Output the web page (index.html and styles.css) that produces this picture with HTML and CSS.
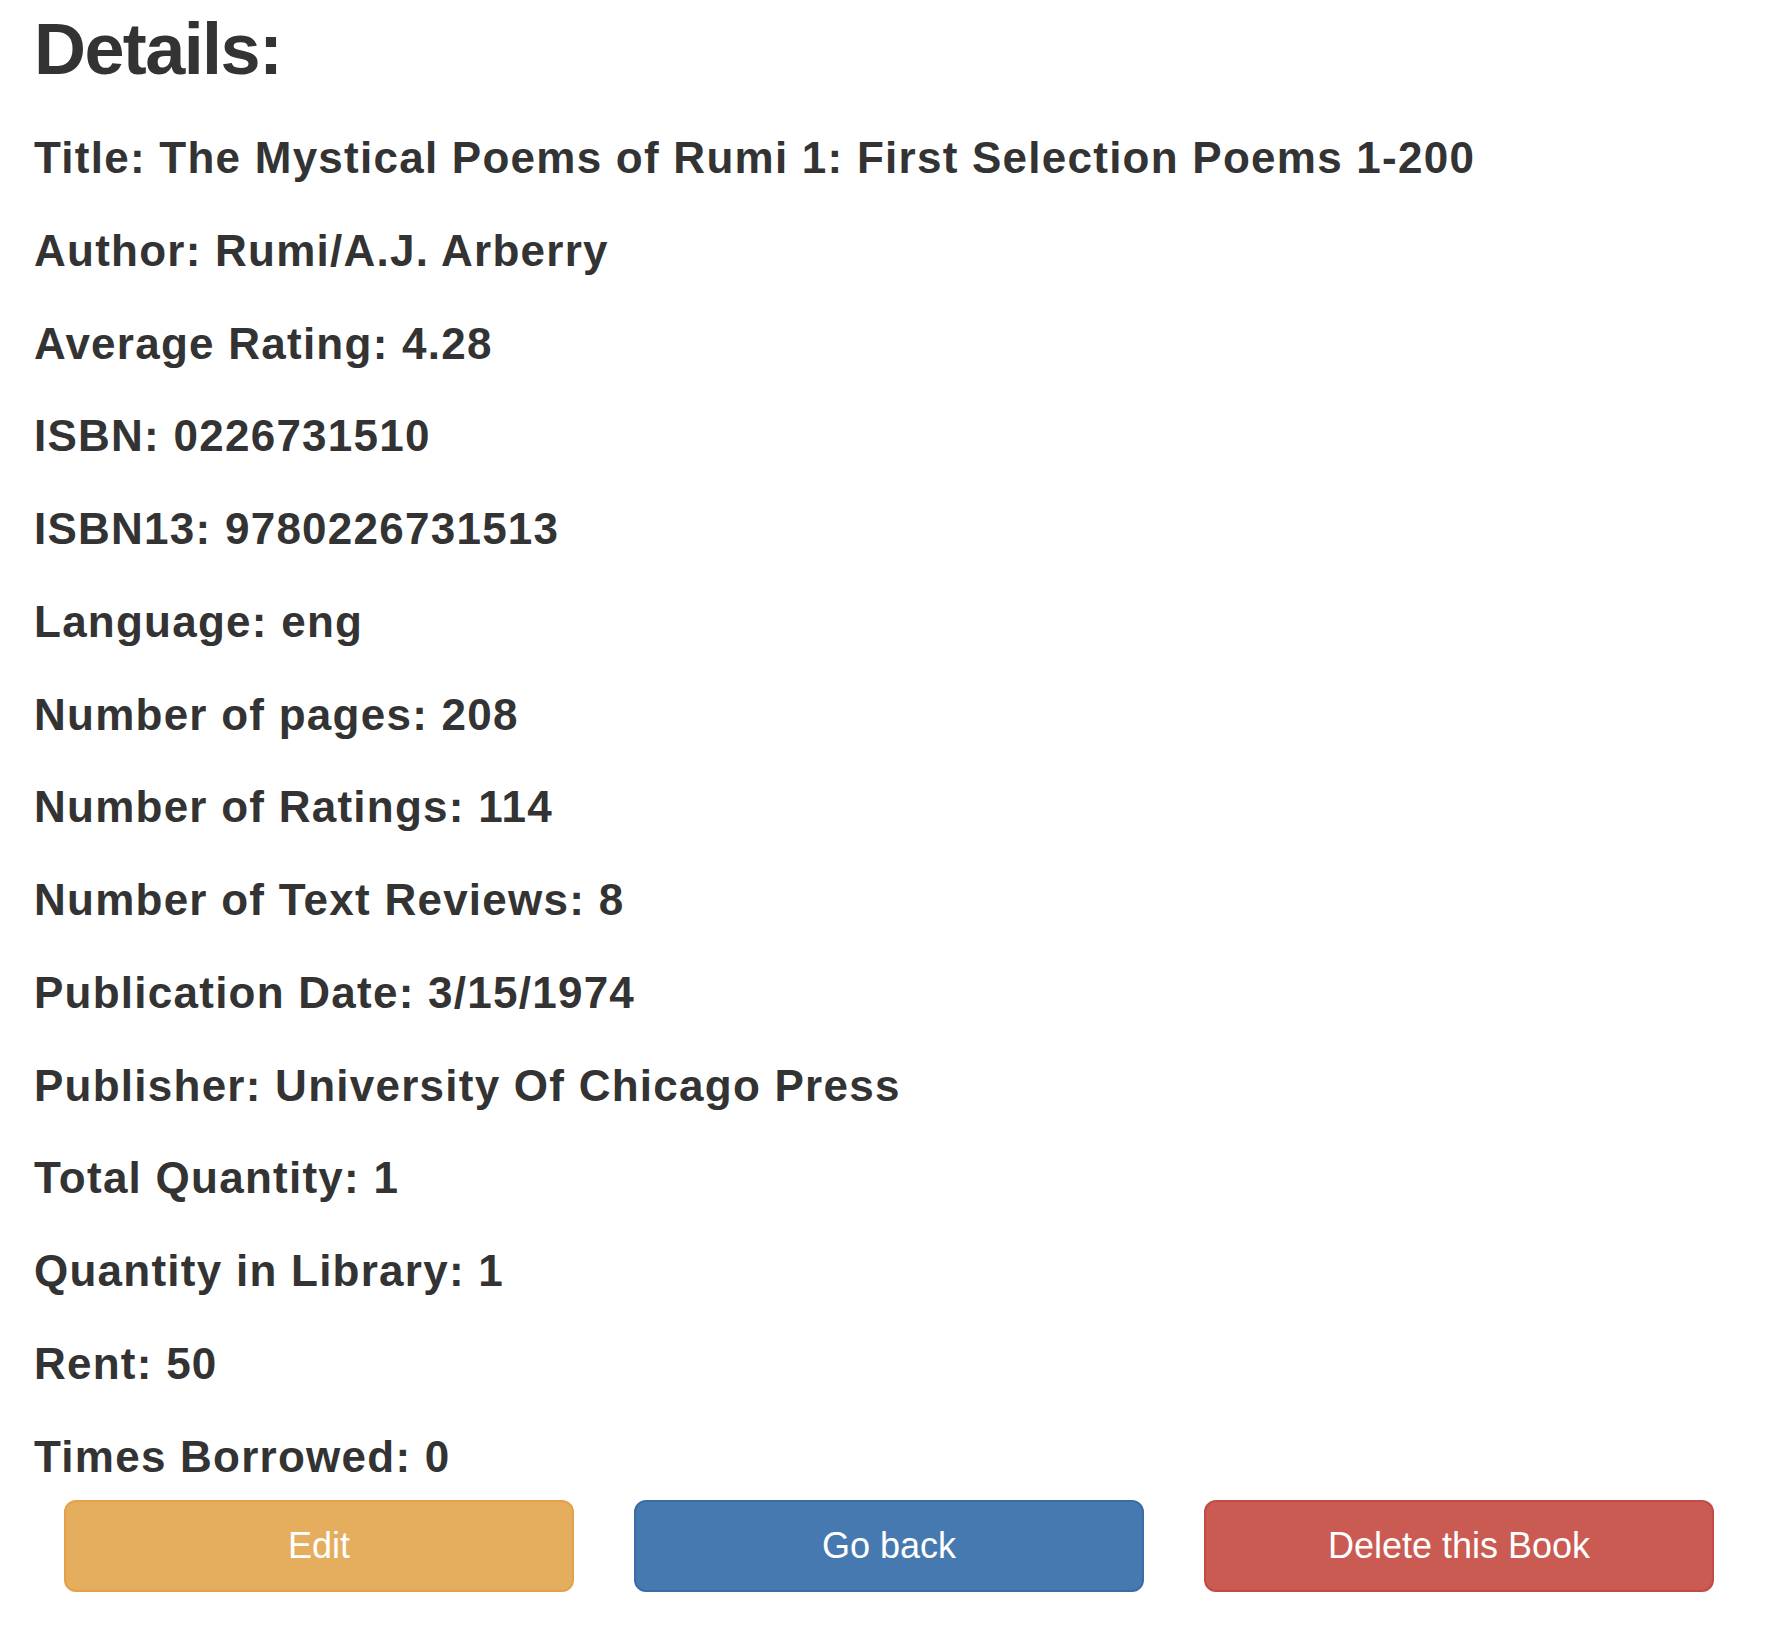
FILE: index.html
```html
<!DOCTYPE html>
<html lang="en">
<head>
<meta charset="utf-8">
<title>Book Details</title>
<link rel="stylesheet" href="styles.css">
</head>
<body>
<main class="page">
  <h1 class="title">Details:</h1>
  <section class="details">
    <p class="item">Title: The Mystical Poems of Rumi 1: First Selection Poems 1-200</p>
    <p class="item">Author: Rumi/A.J. Arberry</p>
    <p class="item">Average Rating: 4.28</p>
    <p class="item">ISBN: 0226731510</p>
    <p class="item">ISBN13: 9780226731513</p>
    <p class="item">Language: eng</p>
    <p class="item">Number of pages: 208</p>
    <p class="item">Number of Ratings: 114</p>
    <p class="item">Number of Text Reviews: 8</p>
    <p class="item">Publication Date: 3/15/1974</p>
    <p class="item">Publisher: University Of Chicago Press</p>
    <p class="item">Total Quantity: 1</p>
    <p class="item">Quantity in Library: 1</p>
    <p class="item">Rent: 50</p>
    <p class="item">Times Borrowed: 0</p>
  </section>
  <div class="actions">
    <div class="col"><button class="btn btn-warning">Edit</button></div>
    <div class="col"><button class="btn btn-primary">Go back</button></div>
    <div class="col"><button class="btn btn-danger">Delete this Book</button></div>
  </div>
</main>
</body>
</html>
```
FILE: styles.css
```css
html, body {
  margin: 0;
  padding: 0;
  background: #ffffff;
}
body {
  font-family: "Liberation Sans", Arial, Helvetica, sans-serif;
  color: #333333;
}
.page {
  padding: 10px 32px 0 34px;
}
.title {
  margin: 0 0 44.8px 0;
  font-size: 72px;
  line-height: 79.2px;
  font-weight: 700;
  letter-spacing: -1.6px;
}
.details {
  display: flex;
  flex-direction: column;
}
.item {
  margin: 0 0 44.75px 0;
  font-size: 44px;
  line-height: 48px;
  font-weight: 700;
  letter-spacing: 1.25px;
}
.item:last-child {
  margin-bottom: 19.5px;
}
.actions {
  display: grid;
  grid-template-columns: repeat(3, 1fr);
}
.col {
  padding: 0 30px;
}
.btn {
  display: block;
  width: 100%;
  height: 92px;
  border: 2px solid transparent;
  border-radius: 12px;
  font-family: "Liberation Sans", Arial, Helvetica, sans-serif;
  font-size: 36px;
  color: #ffffff;
  cursor: pointer;
}
.btn-warning {
  background: #e5ad5e;
  border-color: #e3a24a;
}
.btn-primary {
  background: #4679b0;
  border-color: #3b6ca3;
}
.btn-danger {
  background: #c95b53;
  border-color: #c24c45;
}
```
